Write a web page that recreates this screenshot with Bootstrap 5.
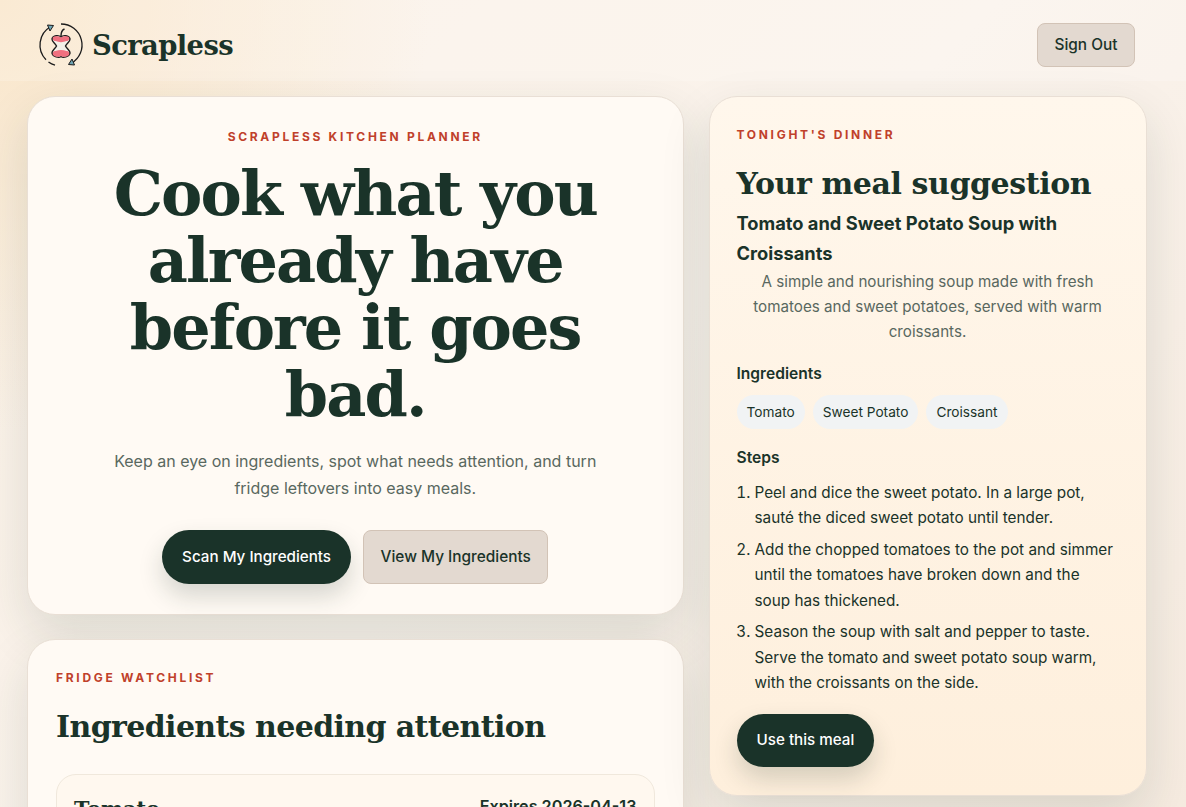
<!DOCTYPE html>
<html lang="en">
<head>
    <meta charset="UTF-8">
    <meta name="viewport" content="width=device-width, initial-scale=1.0">
    <title>Scrapless</title>
    <link href="https://cdn.jsdelivr.net/npm/bootstrap@5.3.0/dist/css/bootstrap.min.css" rel="stylesheet">
    <style>
        html, body { height: 100%; }
        body {
            font-family: Inter, "Liberation Sans", sans-serif;
            color: #1a3329;
            overflow: hidden;
            background: radial-gradient(circle at top left, #f9e6ca 0, rgba(249, 230, 202, 0) 30%), linear-gradient(135deg, #fbf1e6 0%, #faf3ec 50%, #f6ebe0 100%);
        }
        .serif { font-family: "DejaVu Serif", "Liberation Serif", serif; font-weight: 700; color: #1a3329; }
        .site-nav { height: 81px; padding: 9px 51px 0 38px; background: rgba(255, 255, 255, .18); }
        .brand-name { font-size: 27.4px; letter-spacing: -.6px; padding-top: 1px; }
        .btn-soft {
            background: #e3d9d0; border: 1px solid #d2c3b6; color: #1a3329;
            font-size: 15.4px; font-weight: 500; border-radius: 8px; height: 44px; padding: 0 16.5px;
        }
        .btn-soft:hover { background: #d9cdc2; border-color: #d2c3b6; color: #1a3329; }
        .page-wrap { padding: 15px 0 0 27px; gap: 25px; align-items: flex-start; }
        .col-left { width: 656.5px; flex: none; display: flex; flex-direction: column; gap: 24px; }
        .col-right { width: 438px; flex: none; }
        .panel {
            border: 1px solid #e9dfd5; border-radius: 28px;
            box-shadow: 0 20px 50px rgba(26, 51, 41, .13);
        }
        .panel-light { background: #fffaf4; }
        .panel-warm { background: linear-gradient(180deg, #fff7ec 0%, #feefdc 100%); }
        .hero { padding: 32px 56px 29px; height: 519px; }
        .eyebrow { font-size: 12px; font-weight: 700; letter-spacing: 2.7px; color: #c0402a; line-height: 15px; }
        .hero-title { font-size: 62px; line-height: 67px; letter-spacing: -1.9px; margin: 16px -10px 0; }
        .hero-text { font-size: 16px; line-height: 27px; color: #59685f; width: 500px; margin: 20px auto 0; }
        .btn-row { margin-top: 28px; gap: 12px; }
        .btn-main {
            background: #1a3329; color: #fff; border: 0; border-radius: 999px; height: 54px; padding: 0 20px;
            font-size: 15.2px; font-weight: 500; box-shadow: 0 12px 24px rgba(26, 51, 41, .18);
        }
        .btn-main:hover { background: #1a3329; color: #fff; }
        .btn-tall { height: 54px; }
        .watch { padding: 30px 28px 0; height: 300px; }
        .section-title { font-size: 30px; line-height: 38px; letter-spacing: -.6px; margin: 23px 0 0; }
        .watch-item { margin-top: 28px; border: 1px solid #f0e8dc; border-radius: 20px; background: #fff8ef; padding: 20px 17px; height: 120px; }
        .item-name { font-size: 20.8px; line-height: 28px; }
        .item-date { font-size: 16.2px; font-weight: 600; line-height: 20px; margin-top: 1px; }
        .meal { padding: 30px 27px 28px; height: 700px; }
        .meal .section-title { letter-spacing: -.4px; }
        .meal-title { font-size: 18.3px; font-weight: 700; line-height: 30px; margin: 5px 0 0; }
        .meal-text { font-size: 15.2px; line-height: 25px; color: #59685f; margin: 1px 0 0; }
        .sub-label { font-size: 15.6px; font-weight: 600; line-height: 20px; }
        .label-top { margin-top: 20px; }
        .chip-row { margin-top: 11px; }
        .chip { background: #f1f3f4; border-radius: 999px; font-size: 13.7px; line-height: 20px; padding: 7px 10px; color: #1a3329; }
        .label-steps { margin-top: 19px; }
        .step-list { font-size: 15.3px; line-height: 25.3px; padding-left: 18px; margin: 12px 0 0; }
        .step-list li { margin-bottom: 6.5px; }
        .btn-meal { height: 53px; margin-top: 12px; }
    </style>
</head>
<body>
    <nav class="site-nav d-flex align-items-center justify-content-between">
        <a class="d-flex align-items-center gap-2 text-decoration-none" href="#">
            <svg width="46" height="46" viewBox="0 0 46 46" fill="none">
                <path d="M12.500 4.800 A21 21 0 0 0 8 37.700" stroke="#1c1c1c" stroke-width="1.3"/>
                <path d="M10.500 39.900 A21 21 0 0 0 17 43.100" stroke="#1c1c1c" stroke-width="1.3"/>
                <path d="M23 2 A21 21 0 0 1 33.500 41.200" stroke="#1c1c1c" stroke-width="1.3"/>
                <path d="M9.500 3 L15.500 3.500 L12 9 Z" fill="#6fa6b5" stroke="#1c1c1c" stroke-width="1"/>
                <path d="M36.500 43 L30.500 42.500 L34 37 Z" fill="#6fa6b5" stroke="#1c1c1c" stroke-width="1"/>
                <path d="M23 14 C23 10 24 8 26.500 7" stroke="#1c1c1c" stroke-width="1.4"/>
                <path d="M14 17 C15 13 21 13 23 15 C25 13 31 13 32 17 C32 20 29 21 27.500 24 C29 27 32 28 32 31 C31 35 25 36 23 34.500 C21 36 15 35 14 31 C14 28 17 27 18.500 24 C17 21 14 20 14 17 Z" fill="#f3f0e8" stroke="#1c1c1c" stroke-width="1.4"/>
                <path d="M14.700 15.500 C16 13.500 21 14 23 15.500 C25 14 30 13.500 31.300 15.500 C31.600 18 30 19.500 28.500 19 C25 20.500 21 20.500 17.500 19 C16 19.500 14.400 18 14.700 15.500 Z" fill="#f0707f"/>
                <path d="M14.700 32.500 C16 35 21 35.500 23 34 C25 35.500 30 35 31.300 32.500 C31.600 30 30 28.500 28.500 29 C25 27.500 21 27.500 17.500 29 C16 28.500 14.400 30 14.700 32.500 Z" fill="#f0707f"/>
            </svg>
            <span class="serif brand-name">Scrapless</span>
        </a>
        <button class="btn btn-soft" type="button">Sign Out</button>
    </nav>

    <div class="page-wrap d-flex">
        <div class="col-left">
            <section class="panel panel-light hero text-center">
                <div class="eyebrow">SCRAPLESS KITCHEN PLANNER</div>
                <h1 class="serif hero-title">Cook what you already have before it goes bad.</h1>
                <p class="hero-text">Keep an eye on ingredients, spot what needs attention, and turn fridge leftovers into easy meals.</p>
                <div class="d-flex justify-content-center btn-row">
                    <button class="btn btn-main" type="button">Scan My Ingredients</button>
                    <button class="btn btn-soft btn-tall" type="button">View My Ingredients</button>
                </div>
            </section>
            <section class="panel panel-light watch">
                <div class="eyebrow">FRIDGE WATCHLIST</div>
                <h2 class="serif section-title">Ingredients needing attention</h2>
                <div class="watch-item d-flex justify-content-between">
                    <div class="serif item-name">Tomato</div>
                    <div class="item-date">Expires 2026-04-13</div>
                </div>
            </section>
        </div>
        <div class="col-right">
            <section class="panel panel-warm meal">
                <div class="eyebrow">TONIGHT'S DINNER</div>
                <h2 class="serif section-title">Your meal suggestion</h2>
                <h3 class="meal-title">Tomato and Sweet Potato Soup with Croissants</h3>
                <p class="meal-text text-center">A simple and nourishing soup made with fresh tomatoes and sweet potatoes, served with warm croissants.</p>
                <div class="sub-label label-top">Ingredients</div>
                <div class="d-flex gap-2 chip-row">
                    <span class="chip">Tomato</span>
                    <span class="chip">Sweet Potato</span>
                    <span class="chip">Croissant</span>
                </div>
                <div class="sub-label label-steps">Steps</div>
                <ol class="step-list">
                    <li>Peel and dice the sweet potato. In a large pot, sauté the diced sweet potato until tender.</li>
                    <li>Add the chopped tomatoes to the pot and simmer until the tomatoes have broken down and the soup has thickened.</li>
                    <li>Season the soup with salt and pepper to taste. Serve the tomato and sweet potato soup warm, with the croissants on the side.</li>
                </ol>
                <button class="btn btn-main btn-meal" type="button">Use this meal</button>
            </section>
        </div>
    </div>
    <script src="https://cdn.jsdelivr.net/npm/bootstrap@5.3.0/dist/js/bootstrap.bundle.min.js"></script>
</body>
</html>
